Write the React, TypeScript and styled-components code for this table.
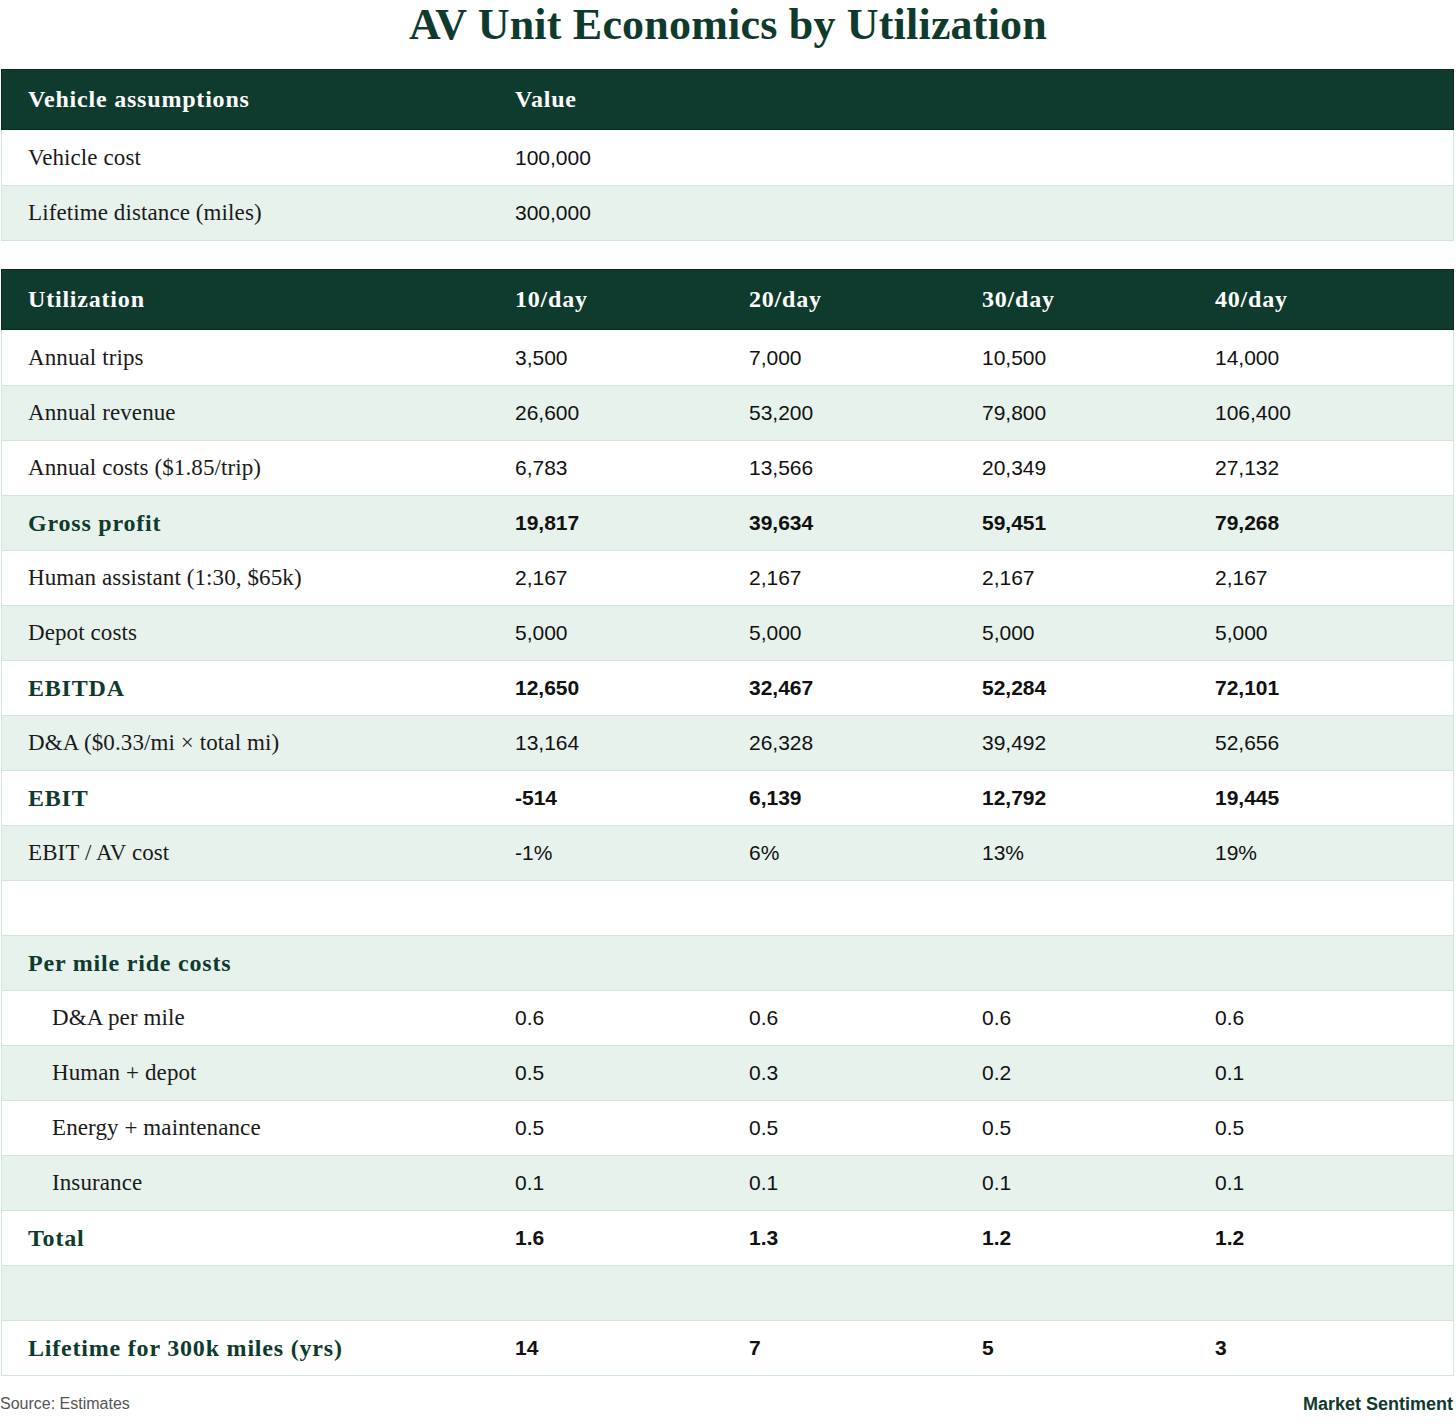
import React from 'react';
import styled, { createGlobalStyle } from 'styled-components';

const GlobalStyle = createGlobalStyle`
  html, body {
    margin: 0;
    padding: 0;
    background: #ffffff;
  }
`;

const GREEN = '#0f3b2e';
const SHADE = '#e8f2ed';
const LINE = '#d3e6dc';
const SERIF = `"Liberation Serif", "DejaVu Serif", serif`;
const SANS = `"Liberation Sans", Arial, sans-serif`;

const Page = styled.div`
  width: 1456px;
  padding-bottom: 12px;
`;

const Title = styled.h1`
  margin: 0;
  height: 69px;
  box-sizing: border-box;
  text-align: center;
  font-family: ${SERIF};
  font-weight: 700;
  font-size: 44px;
  line-height: 49px;
  letter-spacing: 0.2px;
  color: ${GREEN};
`;

const Table = styled.div`
  margin: 0 2px 0 1px;
  border: 1px solid ${LINE};
  border-top: none;
  & + & {
    margin-top: 28px;
  }
`;

const Grid = styled.div`
  display: grid;
  grid-template-columns: 487px 234px 233px 233px 1fr;
`;

const HeadRow = styled(Grid)`
  height: 61px;
  background: ${GREEN};
  border: 1px solid #0a2a20;
  margin: 0 -1px;
  box-sizing: border-box;
  align-items: center;
`;

const HeadCell = styled.div`
  padding-left: 26px;
  font-family: ${SERIF};
  font-weight: 700;
  font-size: 24px;
  letter-spacing: 0.8px;
  color: #ffffff;
`;

const BodyRow = styled(Grid)`
  height: 55px;
  box-sizing: border-box;
  align-items: center;
  border-top: 1px solid ${LINE};
  &:nth-child(even) {
    background: ${SHADE};
  }
  &:first-of-type {
    border-top: none;
  }
`;

const Label = styled.div<{ $bold?: boolean; $indent?: boolean }>`
  padding-left: ${({ $indent }) => ($indent ? '50px' : '26px')};
  font-family: ${SERIF};
  font-size: ${({ $bold }) => ($bold ? '24px' : '23px')};
  letter-spacing: ${({ $bold }) => ($bold ? '0.8px' : '0.1px')};
  font-weight: ${({ $bold }) => ($bold ? 700 : 400)};
  color: ${({ $bold }) => ($bold ? GREEN : '#1a1a1a')};
`;

const Value = styled.div<{ $bold?: boolean }>`
  padding-left: 26px;
  font-family: ${SANS};
  font-size: 21px;
  font-weight: ${({ $bold }) => ($bold ? 700 : 400)};
  color: #111111;
`;

const Footer = styled.div`
  display: flex;
  justify-content: space-between;
  align-items: center;
  height: 56px;
  padding-right: 3px;
`;

const Source = styled.span`
  font-family: ${SANS};
  font-size: 16px;
  color: #555555;
`;

const Brand = styled.span`
  font-family: ${SANS};
  font-size: 18px;
  font-weight: 700;
  color: ${GREEN};
`;

type RowData = {
  label: string;
  values?: string[];
  bold?: boolean;
  indent?: boolean;
};

const assumptions: RowData[] = [
  { label: 'Vehicle cost', values: ['100,000'] },
  { label: 'Lifetime distance (miles)', values: ['300,000'] },
];

const utilization: RowData[] = [
  { label: 'Annual trips', values: ['3,500', '7,000', '10,500', '14,000'] },
  { label: 'Annual revenue', values: ['26,600', '53,200', '79,800', '106,400'] },
  { label: 'Annual costs ($1.85/trip)', values: ['6,783', '13,566', '20,349', '27,132'] },
  { label: 'Gross profit', values: ['19,817', '39,634', '59,451', '79,268'], bold: true },
  { label: 'Human assistant (1:30, $65k)', values: ['2,167', '2,167', '2,167', '2,167'] },
  { label: 'Depot costs', values: ['5,000', '5,000', '5,000', '5,000'] },
  { label: 'EBITDA', values: ['12,650', '32,467', '52,284', '72,101'], bold: true },
  { label: 'D&A ($0.33/mi × total mi)', values: ['13,164', '26,328', '39,492', '52,656'] },
  { label: 'EBIT', values: ['-514', '6,139', '12,792', '19,445'], bold: true },
  { label: 'EBIT / AV cost', values: ['-1%', '6%', '13%', '19%'] },
  { label: '' },
  { label: 'Per mile ride costs', bold: true },
  { label: 'D&A per mile', values: ['0.6', '0.6', '0.6', '0.6'], indent: true },
  { label: 'Human + depot', values: ['0.5', '0.3', '0.2', '0.1'], indent: true },
  { label: 'Energy + maintenance', values: ['0.5', '0.5', '0.5', '0.5'], indent: true },
  { label: 'Insurance', values: ['0.1', '0.1', '0.1', '0.1'], indent: true },
  { label: 'Total', values: ['1.6', '1.3', '1.2', '1.2'], bold: true },
  { label: '' },
  { label: 'Lifetime for 300k miles (yrs)', values: ['14', '7', '5', '3'], bold: true },
];

const DataTable = ({ head, rows }: { head: string[]; rows: RowData[] }) => (
  <Table>
    <HeadRow>
      {head.map((h) => (
        <HeadCell key={h}>{h}</HeadCell>
      ))}
    </HeadRow>
    <div>
      {rows.map((r, i) => (
        <BodyRow key={i}>
          <Label $bold={r.bold} $indent={r.indent}>
            {r.label}
          </Label>
          {(r.values || []).map((v, j) => (
            <Value key={j} $bold={r.bold}>
              {v}
            </Value>
          ))}
        </BodyRow>
      ))}
    </div>
  </Table>
);

const App = () => (
  <Page>
    <GlobalStyle />
    <Title>AV Unit Economics by Utilization</Title>
    <DataTable head={['Vehicle assumptions', 'Value']} rows={assumptions} />
    <DataTable
      head={['Utilization', '10/day', '20/day', '30/day', '40/day']}
      rows={utilization}
    />
    <Footer>
      <Source>Source: Estimates</Source>
      <Brand>Market Sentiment</Brand>
    </Footer>
  </Page>
);

export default App;
